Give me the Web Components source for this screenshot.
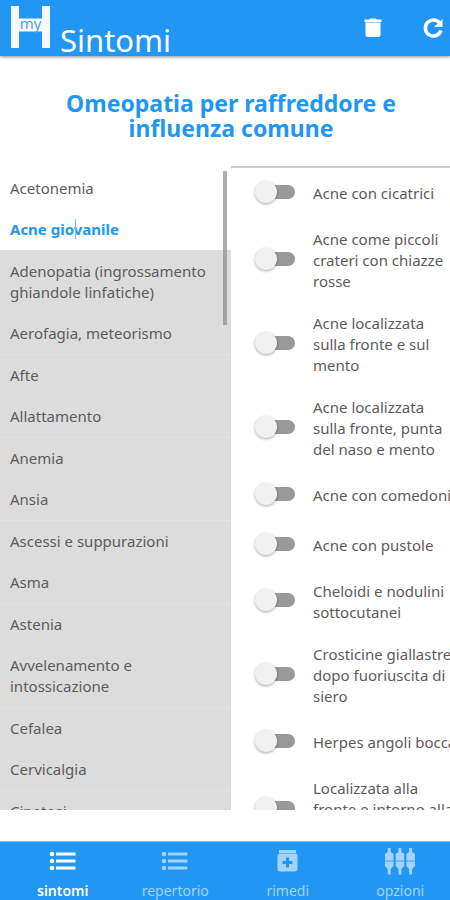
<!DOCTYPE html>
<html lang="it">
<head>
<meta charset="utf-8">
<meta name="viewport" content="width=device-width, initial-scale=1">
<title>Sintomi</title>
<style>
html, body { height: 100%; margin: 0; }
body { font-family: "Noto Sans", "Open Sans", sans-serif; background: #fff; color: #5c5c5c; overflow: hidden; }
</style>
</head>
<body>
<symptom-app></symptom-app>
<script>
const define = (name, html, setup) => {
  const template = document.createElement('template');
  template.innerHTML = html;
  customElements.define(name, class extends HTMLElement {
    constructor() {
      super();
      this.attachShadow({ mode: 'open' }).append(template.content.cloneNode(true));
    }
    connectedCallback() { if (setup) setup(this, this.shadowRoot); }
  });
};

const plug = x => `<g transform="translate(${x} 0)"><path d="M3.200 0h3v4L9 6v6.500H.5V6l2.700-2zM.5 14H9v4l-2.800 3v5.500h-3V21L.5 18z"/><path opacity=".6" d="M.5 12.500H9V14H.5z"/></g>`;
const icons = {
  list: '<g fill="currentColor"><circle cx="3" cy="4" r="2.300"/><circle cx="3" cy="11" r="2.300"/><circle cx="3" cy="18" r="2.300"/><path d="M7 2.500h19.500v3H7zM7 9.500h19.500v3H7zM7 16.500h19.500v3H7z"/></g>',
  jar: '<path fill="currentColor" fill-rule="evenodd" d="M5 0h17v3H5zM6 3.500h15q2.500 0 2.500 2.500v13q0 2.500-2.500 2.500H6q-2.500 0-2.500-2.500V6Q3.500 3.500 6 3.500zM12 7.500V11H8.500v3H12v3.500h3V14h3.500v-3H15V7.500z"/>',
  plugs: `<g fill="currentColor">${plug(-0.5)}${plug(10.2)}${plug(20.9)}</g>`
};

define('app-logo', `
<style>
:host { display: block; position: relative; width: 39px; height: 42px; }
svg { display: block; width: 100%; height: 100%; }
span { position: absolute; left: 0; right: 0; top: 7px; text-align: center; font-size: 15px; line-height: 20px; color: #5a9fd8; }
</style>
<svg viewBox="0 0 39 42" aria-hidden="true"><path fill="#f4faff" d="M0 0h8v12.500h23V0h8v42h-8V25.500H8V42H0z"/></svg>
<span>my</span>`);

define('app-bar', `
<style>
:host { display: block; flex: none; position: relative; background: #2196f3; color: #fff; box-shadow: 0 1px 3px rgba(0,0,0,.45); }
header { display: flex; height: 56px; padding: 0 5px 0 11px; box-sizing: border-box; align-items: center; }
app-logo { margin-bottom: 2px; }
h1 { flex: 1; align-self: flex-end; margin: 0 0 0 10px; font-size: 31px; line-height: 32px; font-weight: 400; }
button { border: 0; padding: 0; margin-left: 36px; background: none; color: inherit; width: 24px; height: 24px; }
svg { display: block; width: 24px; height: 24px; }
</style>
<header>
<app-logo></app-logo>
<h1><slot></slot></h1>
<button aria-label="Elimina"><svg viewBox="0 0 24 24" fill="currentColor"><path d="M4.500 18.500q0 2.500 2.500 2.500h10q2.500 0 2.500-2.500V6.500h-15zM3.500 3.500h4.500L9.500 2.500h5l1.500 1h4.500V6h-17z"/></svg></button>
<button aria-label="Ricarica"><svg viewBox="0 0 24 24" fill="none"><path d="M19 7.500A8 8 0 1 0 20 14.500" stroke="currentColor" stroke-width="3.500"/><path fill="currentColor" d="M21.500 3v8H13z"/></svg></button>
</header>`);

define('symptom-item', `
<style>
:host { display: block; background: #dcdcdc; }
button { display: block; width: 100%; border: 0; margin: 0; padding: 10px 20px 10px 10px; background: none; font: inherit; font-size: 15px; line-height: 21px; color: inherit; text-align: left; }
:host([selected]), :host([plain]) { background: #fff; }
:host([selected]) button { color: #2196f3; font-weight: 700; }
</style>
<button><slot></slot></button>`);

define('symptom-list', `
<style>
:host { display: block; position: relative; overflow: hidden; background: #dcdcdc; }
::slotted(:nth-child(even)) { border-bottom: 1px solid #e1e1e1; }
::slotted([selected]) { border-bottom-color: #dcdcdc; }
.thumb { position: absolute; right: 4px; top: 3px; width: 4px; height: 24%; background: rgba(130,130,130,.65); }
.caret { position: absolute; left: 75px; top: 51px; width: 1px; height: 20px; background: #70bcf8; }
</style>
<slot></slot><div class="thumb"></div><div class="caret"></div>`);

define('toggle-row', `
<style>
:host { display: block; }
label { display: flex; align-items: center; min-height: 50px; padding: 0 0 0 24px; }
input { appearance: none; flex: none; position: relative; margin: 0 18px 3px 4px; width: 36px; height: 14px; border-radius: 7px; background: #999; }
input::before { content: ""; position: absolute; left: -4px; top: -4px; width: 22px; height: 22px; border-radius: 50%; background: #f1f1f1; box-shadow: 0 1px 3px rgba(0,0,0,.35); }
input:checked { background: #90caf9; }
input:checked::before { left: 18px; background: #2196f3; }
span { flex: 0 0 145px; padding: 11px 0 10px; font-size: 15px; line-height: 21px; }
</style>
<label><input type="checkbox" role="switch"><span><slot></slot></span></label>`);

define('toggle-list', `
<style>
:host { display: block; overflow: hidden; }
</style>
<slot></slot>`);

define('tab-item', `
<style>
:host { display: block; flex: 1 1 0; min-width: 0; color: #a3d3fa; }
:host([active]) { color: #fff; }
a { display: flex; flex-direction: column; align-items: center; gap: 6px; padding: 6px 0 0 13px; color: inherit; text-decoration: none; font-size: 14px; line-height: 20px; }
svg { display: block; width: 30px; height: 27px; }
:host([active]) a { font-weight: 600; }
</style>
<a href="#"><svg aria-hidden="true"></svg><slot></slot></a>`, (host, root) => {
  const svg = root.querySelector('svg'), kind = host.getAttribute('icon');
  svg.setAttribute('viewBox', kind === 'plugs' ? '0 0 30 27' : '-1 -2 30 27');
  svg.innerHTML = icons[kind];
});

define('tab-bar', `
<style>
:host { display: block; flex: none; background: #2196f3; border-top: 1px solid #7cc1f8; }
nav { display: flex; height: 58px; }
</style>
<nav><slot></slot></nav>`);

define('symptom-app', `
<style>
:host { display: flex; flex-direction: column; height: 100%; overflow: hidden; }
h2 { flex: none; margin: 0; padding: 35px 40px 25px 52px; color: #2196f3; font-size: 23px; line-height: 25px; font-weight: 700; text-align: center; }
main { flex: 1; min-height: 0; display: grid; grid-template-columns: 231px minmax(0, 1fr); grid-template-rows: 2px minmax(0, 1fr); margin-bottom: 31px; }
.rule { grid-column: 2; background: #ccc; height: 2px; }
symptom-list { grid-column: 1; grid-row: 2; }
toggle-list { grid-column: 2; grid-row: 2; }
</style>
<app-bar>Sintomi</app-bar>
<h2>Omeopatia per raffreddore e influenza comune</h2>
<main>
<div class="rule"></div>
<symptom-list>
<symptom-item plain>Acetonemia</symptom-item>
<symptom-item selected>Acne giovanile</symptom-item>
<symptom-item>Adenopatia (ingrossamento ghiandole linfatiche)</symptom-item>
<symptom-item>Aerofagia, meteorismo</symptom-item>
<symptom-item>Afte</symptom-item>
<symptom-item>Allattamento</symptom-item>
<symptom-item>Anemia</symptom-item>
<symptom-item>Ansia</symptom-item>
<symptom-item>Ascessi e suppurazioni</symptom-item>
<symptom-item>Asma</symptom-item>
<symptom-item>Astenia</symptom-item>
<symptom-item>Avvelenamento e intossicazione</symptom-item>
<symptom-item>Cefalea</symptom-item>
<symptom-item>Cervicalgia</symptom-item>
<symptom-item>Cinetosi</symptom-item>
</symptom-list>
<toggle-list>
<toggle-row>Acne con cicatrici</toggle-row>
<toggle-row>Acne come piccoli crateri con chiazze rosse</toggle-row>
<toggle-row>Acne localizzata sulla fronte e sul mento</toggle-row>
<toggle-row>Acne localizzata sulla fronte, punta del naso e mento</toggle-row>
<toggle-row>Acne con comedoni</toggle-row>
<toggle-row>Acne con pustole</toggle-row>
<toggle-row>Cheloidi e nodulini sottocutanei</toggle-row>
<toggle-row>Crosticine giallastre dopo fuoriuscita di siero</toggle-row>
<toggle-row>Herpes angoli bocca</toggle-row>
<toggle-row>Localizzata alla fronte e intorno alla bocca</toggle-row>
</toggle-list>
</main>
<tab-bar>
<tab-item icon="list" active>sintomi</tab-item>
<tab-item icon="list">repertorio</tab-item>
<tab-item icon="jar">rimedi</tab-item>
<tab-item icon="plugs">opzioni</tab-item>
</tab-bar>`);
</script>
</body>
</html>
